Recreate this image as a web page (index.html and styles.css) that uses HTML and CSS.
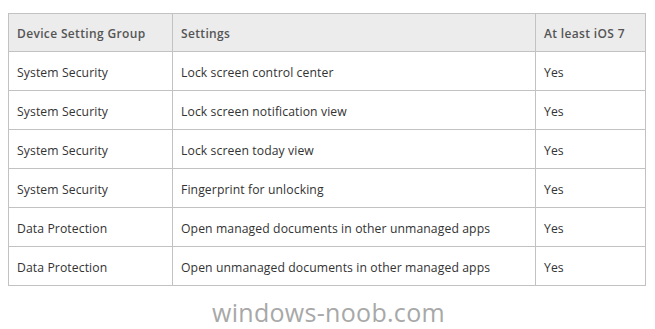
FILE: index.html
```html
<!DOCTYPE html>
<html lang="en">
<head>
  <meta charset="UTF-8" />
  <title>iOS 7 Settings</title>
  <link rel="stylesheet" href="styles.css">
</head>
<body>
  <table class="settings-table">
    <thead>
      <tr>
        <th class="col-group">Device Setting Group</th>
        <th class="col-setting">Settings</th>
        <th class="col-ios">At least iOS 7</th>
      </tr>
    </thead>
    <tbody>
      <tr><td>System Security</td><td>Lock screen control center</td><td>Yes</td></tr>
      <tr><td>System Security</td><td>Lock screen notification view</td><td>Yes</td></tr>
      <tr><td>System Security</td><td>Lock screen today view</td><td>Yes</td></tr>
      <tr><td>System Security</td><td>Fingerprint for unlocking</td><td>Yes</td></tr>
      <tr><td>Data Protection</td><td>Open managed documents in other unmanaged apps</td><td>Yes</td></tr>
      <tr><td>Data Protection</td><td>Open unmanaged documents in other managed apps</td><td>Yes</td></tr>
    </tbody>
  </table>

  <div class="watermark">windows-noob.com</div>
</body>
</html>
```

FILE: styles.css
```css
* {
  box-sizing: border-box;
}

body {
  margin: 0;
  padding: 13px 0 0 8px;
  background: #fff;
  font-family: 'Open Sans', sans-serif;
  color: #333;
}

.settings-table {
  width: 638px;
  border-collapse: collapse;
  table-layout: fixed;
}

th, td {
  border: 1px solid #c2c2c2;
  padding: 0 8px;
  text-align: left;
  font-size: 12.2px;
  white-space: nowrap;
}

th {
  height: 38px;
  padding-top: 1px;
  background: #ececec;
  color: #555;
  font-weight: 600;
  font-size: 12px;
  letter-spacing: 0.35px;
}

td {
  height: 39px;
  padding-top: 2px;
  letter-spacing: 0.1px;
}

.col-group {
  width: 164px;
}

.col-setting {
  width: 363px;
}

.watermark {
  margin: 9px 0 0 204px;
  font-size: 25px;
  color: #a8a8a8;
  letter-spacing: 0.3px;
}
```
